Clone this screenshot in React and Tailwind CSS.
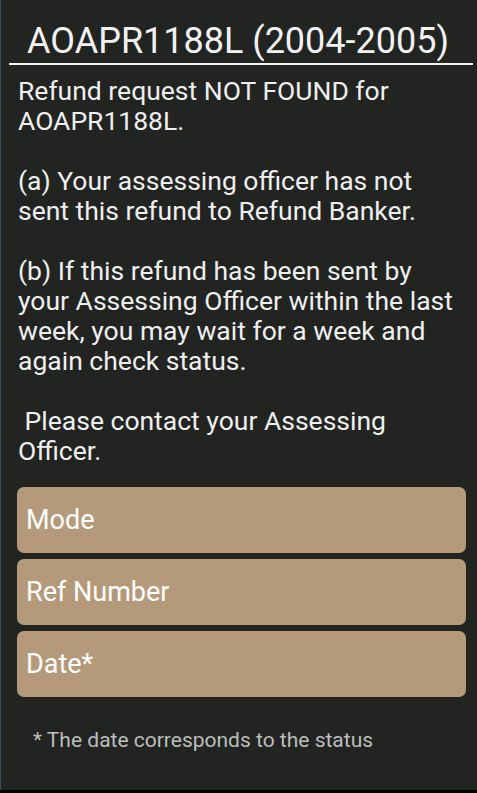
export default function App() {
  const fields = ['Mode', 'Ref Number', 'Date*'];
  return (
    <div className="w-[477px] h-[793px] flex flex-col bg-black" style={{ fontFamily: 'Roboto, sans-serif' }}>
      <div className="flex-1 flex bg-[#222422]">
        <div className="w-px bg-[#3e4b58]" />
        <div className="flex-1 flex flex-col">
          <div className="pt-[21px] pl-[26px] text-[36px] leading-[40px] text-[#f2f2f2] whitespace-nowrap">AOAPR1188L (2004-2005)</div>
          <div className="ml-[8px] mr-[4px] mt-[2px] h-[2px] bg-[#f2f2f2]" />
          <div className="pl-[17px] pt-[11px] text-[26.5px] leading-[30px] text-[#efefef] whitespace-pre">
            {'Refund request NOT FOUND for\nAOAPR1188L.\n\n(a) Your assessing officer has not\nsent this refund to Refund Banker.\n\n(b) If this refund has been sent by\nyour Assessing Officer within the last\nweek, you may wait for a week and\nagain check status.\n\n Please contact your Assessing\nOfficer.'}
          </div>
          <div className="mt-[21px] ml-[16px] mr-[11px] flex flex-col gap-[6px]">
            {fields.map((f) => (
              <div key={f} className="h-[66px] rounded-[7px] bg-[#b49a7b] flex items-center pl-[9px] text-[27px] text-white">
                {f}
              </div>
            ))}
          </div>
          <div className="mt-[28px] pl-[32px] text-[21px] text-[#bdbdbd] whitespace-nowrap">* The date corresponds to the status</div>
        </div>
      </div>
      <div className="h-[3px]" />
    </div>
  );
}
